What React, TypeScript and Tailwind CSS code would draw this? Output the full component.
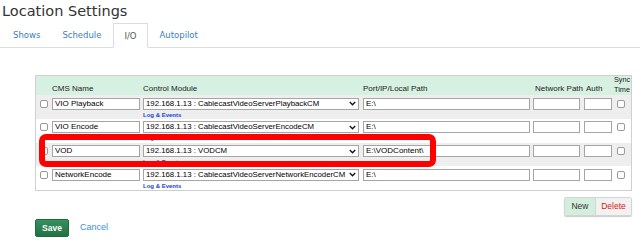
const TABS = ["Shows", "Schedule", "I/O", "Autopilot"];

const ROWS = [
  { name: "VIO Playback", module: "192.168.1.13 : CablecastVideoServerPlaybackCM", path: "E:\\", bg: "bg-[#eeeeee]" },
  { name: "VIO Encode", module: "192.168.1.13 : CablecastVideoServerEncodeCM", path: "E:\\", bg: "bg-white" },
  { name: "VOD", module: "192.168.1.13 : VODCM", path: "E:\\VODContent\\", bg: "bg-[#eeeeee]" },
  { name: "NetworkEncode", module: "192.168.1.13 : CablecastVideoServerNetworkEncoderCM", path: "E:\\", bg: "bg-white" },
];

function Box() {
  return <div className="w-[8px] h-[8px] border border-[#9a9a9a] rounded-[2px] bg-white" />;
}

function Field({ w, value }: { w: string; value?: string }) {
  return (
    <div className={`${w} h-[12px] border border-[#a5a5a5] bg-white px-[2px] text-[8px] leading-[10px] text-black overflow-hidden whitespace-nowrap`}>
      {value}
    </div>
  );
}

export default function App() {
  return (
    <div className="w-[640px] h-[242px] bg-white overflow-hidden relative font-['Liberation_Sans',Arial,sans-serif]">
      <h1 className="pl-[2px] pt-[1px] h-[23px] text-[14.5px] leading-[20px] text-[#333] font-['DejaVu_Sans',Verdana,sans-serif]">
        Location Settings
      </h1>

      <div className="flex h-[25px] border-b border-[#dddddd] pl-[2px] font-['DejaVu_Sans',Verdana,sans-serif] text-[8.5px]">
        {TABS.map((t) => (
          <div
            key={t}
            className={`px-[10px] pt-[1px] flex items-center ${
              t === "I/O"
                ? "bg-white border border-[#dddddd] border-b-white -mb-px text-[#555] mx-[1px]"
                : "text-[#3a7dbf] mx-[1px]"
            }`}
          >
            {t}
          </div>
        ))}
      </div>

      <div className="ml-[35px] mt-[27px] w-[597px] border border-[#d0d0d0]">
        <div className="flex items-end h-[19px] bg-[#d6f0e1] text-[8px] leading-[10px] text-[#222] pb-[1px]">
          <div className="w-[16px]" />
          <div className="w-[91px]">CMS Name</div>
          <div className="w-[220px]">Control Module</div>
          <div className="w-[170px]">Port/IP/Local Path</div>
          <div className="w-[51px] pl-[2px]">Network Path</div>
          <div className="w-[30px] pl-[2px]">Auth</div>
          <div className="w-[17px] text-[7.3px] leading-[9.5px] whitespace-nowrap">Sync<br />Time</div>
        </div>

        {ROWS.map((r) => (
          <div key={r.name} className={`flex h-[23.75px] pt-[2.5px] ${r.bg}`}>
            <div className="w-[16px] pl-[4px] pt-[2px]"><Box /></div>
            <div className="w-[91px]"><Field w="w-[88px]" value={r.name} /></div>
            <div className="w-[220px]">
              <div className="w-[216px] h-[12px] border border-[#a5a5a5] bg-white flex items-center pl-[2px] pr-[2px] text-[7.8px] leading-[10px] text-black">
                <span className="flex-1 overflow-hidden whitespace-nowrap">{r.module}</span>
                <svg width="7" height="5" viewBox="0 0 7 5" className="ml-[1px] shrink-0">
                  <path d="M0.8 1 L3.5 3.8 L6.2 1" fill="none" stroke="#111" strokeWidth="1.3" />
                </svg>
              </div>
              <div className="text-[6px] leading-[8px] mt-[1px] font-bold text-[#1a3fd6]">Log &amp; Events</div>
            </div>
            <div className="w-[170px]"><Field w="w-[167px]" value={r.path} /></div>
            <div className="w-[51px]"><Field w="w-[47px]" /></div>
            <div className="w-[30px]"><Field w="w-[28px]" /></div>
            <div className="w-[17px] pl-[3px] pt-[2px]"><Box /></div>
          </div>
        ))}
      </div>

      <div className="flex justify-end mr-[8px] mt-[6px]">
        <div className="flex h-[19px] rounded-[2px] shadow-[0_1px_1px_rgba(0,0,0,0.2)] border border-[#d4d4d4] overflow-hidden text-[8.5px]">
          <div className="w-[31px] flex items-center justify-center bg-[#d3eedd] text-[#333] border-r border-[#c9dccf]">New</div>
          <div className="w-[35px] flex items-center justify-center bg-[#f2f2f2] text-[#e01515]">Delete</div>
        </div>
      </div>

      <div className="flex items-center ml-[35px] mt-[3px]">
        <div className="w-[34px] h-[18px] rounded-[2px] bg-gradient-to-b from-[#34925c] to-[#237045] border border-[#1f6a3f] text-white font-bold text-[8.5px] flex items-center justify-center">
          Save
        </div>
        <div className="ml-[11px] text-[9px] text-[#3b8fd8]">Cancel</div>
      </div>

      <div className="absolute left-[39px] top-[134px] w-[397px] h-[33px] border-[6px] border-[#ff0000] rounded-[7px]" />
    </div>
  );
}
